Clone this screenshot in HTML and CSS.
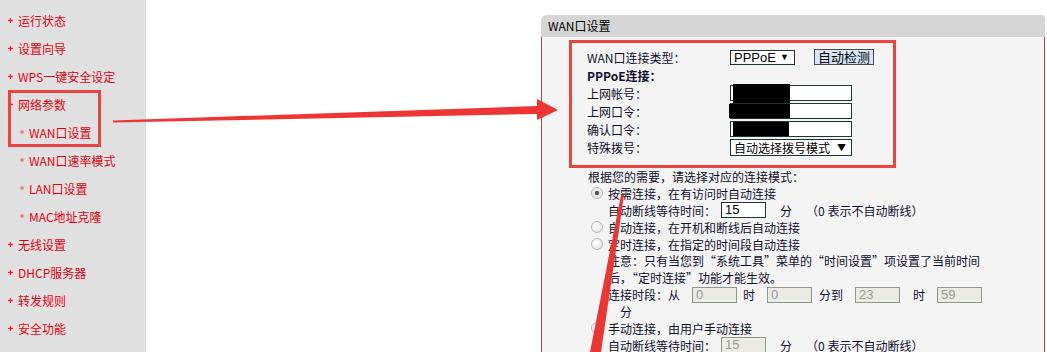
FILE: index.html
```html
<!DOCTYPE html>
<html lang="zh-CN">
<head>
  <meta charset="UTF-8">
  <title>WAN口设置</title>
  <link rel="stylesheet" href="styles.css">
</head>
<body>
  <div class="sidebar">
    <a class="nav">运行状态</a>
    <a class="nav">设置向导</a>
    <a class="nav">WPS一键安全设定</a>
    <a class="nav">网络参数</a>
    <a class="nav sub">WAN口设置</a>
    <a class="nav sub">WAN口速率模式</a>
    <a class="nav sub">LAN口设置</a>
    <a class="nav sub">MAC地址克隆</a>
    <a class="nav">无线设置</a>
    <a class="nav">DHCP服务器</a>
    <a class="nav">转发规则</a>
    <a class="nav">安全功能</a>
  </div>

  <div class="main">
    <div class="panel">
      <div class="panel-title">WAN口设置</div>
      <div class="panel-body">
        <div class="form">
          <div class="row">
            <span class="label">WAN口连接类型：</span>
            <span class="field">
              <span class="select short">PPPoE<i>▼</i></span>
              <button class="btn">自动检测</button>
            </span>
          </div>
          <div class="row">
            <span class="label bold">PPPoE连接：</span>
          </div>
          <div class="row">
            <span class="label">上网帐号：</span>
            <span class="field"><span class="text-input"><b class="redact r1"></b></span></span>
          </div>
          <div class="row">
            <span class="label">上网口令：</span>
            <span class="field"><span class="text-input"><b class="redact r2"></b></span></span>
          </div>
          <div class="row">
            <span class="label">确认口令：</span>
            <span class="field"><span class="text-input"><b class="redact r3"></b></span></span>
          </div>
          <div class="row">
            <span class="label">特殊拨号：</span>
            <span class="field"><span class="select wide">自动选择拨号模式<i>▼</i></span></span>
          </div>
        </div>

        <div class="modes">
          <div class="line">根据您的需要，请选择对应的连接模式：</div>
          <div class="line"><span class="radio checked"></span>按需连接，在有访问时自动连接</div>
          <div class="line indent">自动断线等待时间：<span class="num">15</span><span class="unit">分</span>（0 表示不自动断线）</div>
          <div class="line"><span class="radio"></span>自动连接，在开机和断线后自动连接</div>
          <div class="line"><span class="radio"></span>定时连接，在指定的时间段自动连接</div>
          <div class="line indent">注意：只有当您到“系统工具”菜单的“时间设置”项设置了当前时间</div>
          <div class="line indent">后，“定时连接”功能才能生效。</div>
          <div class="line indent">连接时段：从<span class="num off t1">0</span>时<span class="num off t2">0</span>分到<span class="num off t3">23</span>时<span class="num off t4">59</span></div>
          <div class="line indent wrap">分</div>
          <div class="line"><span class="radio"></span>手动连接，由用户手动连接</div>
          <div class="line indent">自动断线等待时间：<span class="num off">15</span><span class="unit">分</span>（0 表示不自动断线）</div>
        </div>
      </div>
      <div class="mark mark-form"></div>
    </div>
  </div>

  <div class="mark mark-nav"></div>
  <svg class="arrows" viewBox="0 0 1047 352" width="1047" height="352">
    <polygon points="113,120.5 537,106 537,99 558,110 537,120 537,114 113,122.5" fill="#ee3535" />
    <polygon points="621,195 624,195 601,352 590,352" fill="#ee3535" />
  </svg>
</body>
</html>
```

FILE: styles.css
```css
html, body {
  margin: 0;
  padding: 0;
  width: 1047px;
  height: 352px;
  overflow: hidden;
  background: #fff;
}
body {
  display: flex;
  position: relative;
  font-family: "Noto Sans CJK SC", "Liberation Sans", sans-serif;
  font-size: 12px;
}

/* left menu */
.sidebar {
  width: 146px;
  flex: none;
  background: #e0e0e0;
  padding-top: 6px;
  display: flex;
  flex-direction: column;
}
.nav {
  display: flex;
  align-items: center;
  gap: 5px;
  height: 28px;
  padding-left: 8px;
  color: #e60012;
  white-space: nowrap;
}
.nav::before {
  content: "";
  width: 5px;
  height: 5px;
  background:
    linear-gradient(#e8202a, #e8202a) center / 5px 1px no-repeat,
    linear-gradient(#e8202a, #e8202a) center / 1px 5px no-repeat,
    radial-gradient(circle, #f4a0a0 40%, transparent 75%);
}
.nav.sub {
  padding-left: 20px;
}
.nav.sub::before {
  width: 4px;
  height: 4px;
  background: radial-gradient(circle, #f07a7a 45%, transparent 80%);
}

/* content */
.main {
  flex: 1;
  padding: 15px 0 0 395px;
}
.panel {
  position: relative;
  width: 504px;
  height: 337px;
  color: #10102e;
}
.panel-title {
  height: 22px;
  line-height: 22px;
  padding-left: 7px;
  background: #d6d6d6;
  border-radius: 6px 4px 0 0;
  color: #000;
}
.panel-body {
  height: 315px;
  background: #f4f4f4;
  border-left: 1px solid #b54242;
  border-right: 1px solid #b54242;
  padding: 11px 0 0 45px;
}

.row {
  display: grid;
  grid-template-columns: 143px auto;
  align-items: center;
  height: 18px;
}
.label.bold {
  font-weight: bold;
}
.field {
  display: flex;
  align-items: center;
}
.select {
  display: flex;
  justify-content: space-between;
  align-items: center;
  box-sizing: border-box;
  height: 15px;
  background: #fff;
  border: 1px solid #1e3434;
  padding: 0 5px 0 3px;
  color: #000;
}
.select i {
  font-style: normal;
  font-size: 9px;
}
.select.short {
  width: 65px;
  font-family: "Liberation Sans", sans-serif;
  font-size: 13px;
}
.select.wide {
  width: 122px;
  height: 17px;
  font-size: 12px;
}
.btn {
  margin-left: 19px;
  width: 60px;
  height: 16px;
  padding: 0;
  background: #d6e6f8;
  border: 1px solid #4a4a4a;
  font: inherit;
  font-size: 13px;
  line-height: 14px;
  color: #000;
}
.text-input {
  position: relative;
  display: block;
  box-sizing: border-box;
  width: 122px;
  height: 16px;
  background: #fff;
  border: 1px solid #1e3434;
}
.redact {
  position: absolute;
  background: #000;
}
.r1 { left: 2px; top: -2px; width: 57px; height: 19px; }
.r2 { left: -2px; top: 0; width: 61px; height: 14px; }
.r3 { left: 2px; top: 0; width: 56px; height: 14px; }

/* connection modes */
.modes {
  margin-top: 12px;
  padding-left: 1px;
}
.line {
  display: flex;
  align-items: center;
  height: 16.9px;
  white-space: nowrap;
}
.line.indent {
  padding-left: 20px;
}
.line.wrap {
  padding-left: 32px;
}
.radio {
  box-sizing: border-box;
  width: 12px;
  height: 12px;
  margin: 0 5px 0 3px;
  border-radius: 50%;
  border: 1px solid #b4b4b4;
  background: radial-gradient(circle at 40% 35%, #fff, #dedede);
}
.radio.checked {
  background: radial-gradient(circle, #555 28%, #e6e6e6 34%, #f4f4f4);
}
.num {
  box-sizing: border-box;
  width: 45px;
  height: 16px;
  margin-left: 5px;
  padding-left: 3px;
  background: #fff;
  border: 1px solid #1e3434;
  font-family: "Liberation Sans", sans-serif;
  font-size: 13px;
  line-height: 14px;
  color: #000;
}
.num.off {
  background: #ebebe4;
  border-color: #8c9a8c;
  color: #9a9a9a;
}
.unit {
  margin: 0 14px;
}
.t1 { margin: 0 6px 0 12px; }
.t2 { margin: 0 7px 0 12px; }
.t3 { margin: 0 13px 0 12px; }
.t4 { margin-left: 12px; }

/* annotations */
.mark {
  position: absolute;
  box-sizing: border-box;
  border: 3px solid #e84444;
  pointer-events: none;
}
.mark-form {
  left: 28px;
  top: 25px;
  width: 327px;
  height: 128px;
}
.mark-nav {
  left: 8px;
  top: 90px;
  width: 93px;
  height: 57px;
}
.arrows {
  position: absolute;
  left: 0;
  top: 0;
  pointer-events: none;
}
```
